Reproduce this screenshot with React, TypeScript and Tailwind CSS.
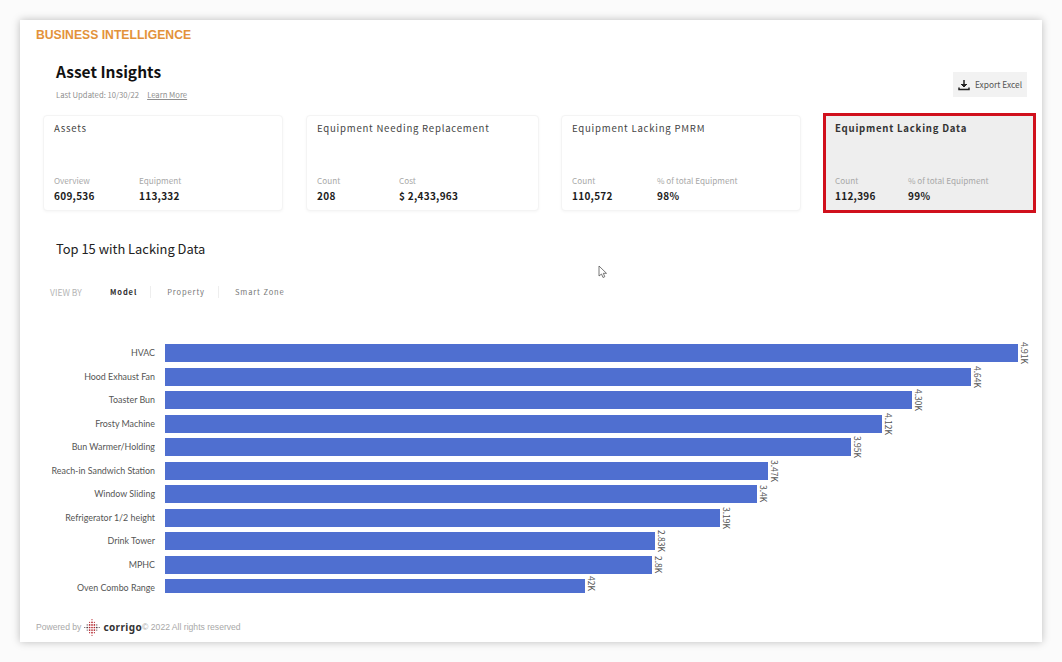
const bars = [
  { label: 'HVAC', value: '4.91K', width: 853 },
  { label: 'Hood Exhaust Fan', value: '4.64K', width: 806 },
  { label: 'Toaster Bun', value: '4.30K', width: 747 },
  { label: 'Frosty Machine', value: '4.12K', width: 717 },
  { label: 'Bun Warmer/Holding', value: '3.95K', width: 686 },
  { label: 'Reach-in Sandwich Station', value: '3.47K', width: 603 },
  { label: 'Window Sliding', value: '3.4K', width: 592 },
  { label: 'Refrigerator 1/2 height', value: '3.19K', width: 555 },
  { label: 'Drink Tower', value: '2.83K', width: 490 },
  { label: 'MPHC', value: '2.8K', width: 487 },
  { label: 'Oven Combo Range', value: '42K', width: 420 },
];

type Stat = { label: string; value: string; width: string };

function Card({ title, stats, className }: { title: string; stats: Stat[]; className: string }) {
  return (
    <div className={`flex h-[96px] flex-col justify-between rounded-sm border border-[#f4f4f4] bg-white px-[10px] pb-[6px] pt-[4px] shadow-[0_1px_3px_rgba(0,0,0,0.04)] ${className}`}>
      <div className="text-[9.6px] leading-[16px] tracking-[0.08em] text-[#444]">{title}</div>
      <div className="flex">
        {stats.map(s => (
          <div key={s.label} className={s.width}>
            <div className="text-[8.2px] leading-[15px] text-[#a8a8a8]">{s.label}</div>
            <div className="text-[10px] font-bold leading-[16px] tracking-[0.03em] text-[#1c1c1c]">{s.value}</div>
          </div>
        ))}
      </div>
    </div>
  );
}

function CorrigoMark() {
  const dots: [number, number, number][] = [];
  for (let y = -3; y <= 3; y++) {
    for (let x = -3; x <= 3; x++) {
      if (x === 0 || y === 0 || (Math.abs(x) === 1 && Math.abs(y) <= 2) || (Math.abs(y) === 1 && Math.abs(x) <= 2)) {
        dots.push([x, y, Math.abs(x) + Math.abs(y) <= 2 ? 0.85 : 0.6]);
      }
    }
  }
  return (
    <svg width="16" height="17" viewBox="-8 -8.5 16 17" className="mx-[3px] shrink-0">
      {dots.map(([x, y, r]) => (
        <circle key={`${x}-${y}`} cx={x * 2.4} cy={y * 2.6} r={r} fill={Math.abs(x) <= 1 ? '#b3262e' : '#4a3c40'} />
      ))}
    </svg>
  );
}

export default function App() {
  return (
    <div className="h-[662px] w-[1062px] overflow-hidden bg-[#fbfbfb] p-[20px] font-['Noto_Sans_CJK_JP','Noto_Sans',sans-serif]">
      <div className="relative flex h-[622px] w-[1022px] flex-col bg-white shadow-[0_0_8px_rgba(0,0,0,0.25)]">
        <div className="pl-[16px] pt-[7px] font-['Liberation_Sans',sans-serif] text-[12.2px] font-bold leading-[16px] text-[#e3923a]">
          BUSINESS INTELLIGENCE
        </div>

        <div className="flex items-start justify-between pl-[36px] pr-[15px] pt-[16px]">
          <div>
            <h1 className="text-[15.5px] font-bold leading-[25px] text-[#111]">Asset Insights</h1>
            <div className="mt-[5px] flex gap-[8px] text-[7.7px] leading-[12px] text-[#8f8f8f]">
              <span>Last Updated: 10/30/22</span>
              <span className="underline">Learn More</span>
            </div>
          </div>
          <button className="mt-[13px] flex h-[25px] w-[74px] items-center justify-center gap-[5px] bg-[#f2f2f2] text-[8.4px] text-[#555]">
            <svg width="12" height="12" viewBox="0 0 12 12" fill="none" stroke="#222" strokeWidth="1.5">
              <path d="M6 1v6" />
              <path d="M3 5l3 3 3-3" fill="#222" stroke="#222" strokeWidth="1" />
              <path d="M1 8.5v2h10v-2" />
            </svg>
            Export Excel
          </button>
        </div>

        <div className="flex items-center pl-[23px] pr-[6px] pt-[12px]">
          <Card
            title="Assets"
            className="w-[240px]"
            stats={[
              { label: 'Overview', value: '609,536', width: 'w-[85px]' },
              { label: 'Equipment', value: '113,332', width: '' },
            ]}
          />
          <Card
            title="Equipment Needing Replacement"
            className="ml-[23px] w-[233px]"
            stats={[
              { label: 'Count', value: '208', width: 'w-[82px]' },
              { label: 'Cost', value: '$ 2,433,963', width: '' },
            ]}
          />
          <Card
            title="Equipment Lacking PMRM"
            className="ml-[22px] w-[240px]"
            stats={[
              { label: 'Count', value: '110,572', width: 'w-[85px]' },
              { label: '% of total Equipment', value: '98%', width: '' },
            ]}
          />
          <div className="ml-[22px] flex h-[100px] w-[213px] flex-col justify-between border-[3px] border-[#d0101c] bg-[#eeeeee] px-[9px] pb-[6px] pt-[4px]">
            <div className="text-[9.6px] font-bold leading-[16px] tracking-[0.08em] text-[#333]">Equipment Lacking Data</div>
            <div className="flex">
              <div className="w-[73px]">
                <div className="text-[8.2px] leading-[15px] text-[#a8a8a8]">Count</div>
                <div className="text-[10px] font-bold leading-[16px] tracking-[0.03em] text-[#1c1c1c]">112,396</div>
              </div>
              <div>
                <div className="text-[8.2px] leading-[15px] text-[#a8a8a8]">% of total Equipment</div>
                <div className="text-[10px] font-bold leading-[16px] tracking-[0.03em] text-[#1c1c1c]">99%</div>
              </div>
            </div>
          </div>
        </div>

        <h2 className="pl-[36px] pt-[25px] text-[12.9px] leading-[22px] text-[#222]">Top 15 with Lacking Data</h2>

        <div className="flex items-center pl-[30px] pt-[25px] text-[7.5px] leading-[14px] tracking-[0.12em]">
          <span className="w-[60px] text-[8.5px] tracking-normal text-[#b5b5b5]">VIEW BY</span>
          <span className="font-bold text-[#333]">Model</span>
          <span className="ml-[13px] mr-[16px] h-[12px] w-px bg-[#eeeeee]" />
          <span className="text-[#777]">Property</span>
          <span className="ml-[13px] mr-[16px] h-[12px] w-px bg-[#eeeeee]" />
          <span className="text-[#777]">Smart Zone</span>
        </div>

        <div className="mt-[45px]">
          {bars.map(b => (
            <div key={b.label} className="group mb-[5.5px] flex h-[18px] items-center last:mb-0">
              <div className="w-[145px] shrink-0 pr-[10px] text-right font-['Lato',sans-serif] text-[8.9px] text-[#555]">{b.label}</div>
              <div className="h-full bg-[#4f6fd0] group-last:h-[14px] group-last:self-start" style={{ width: b.width }} />
              <span className="ml-[2px] text-[8.5px] leading-[9px] text-[#555] [writing-mode:vertical-rl] group-last:-mt-[3px] group-last:self-start">{b.value}</span>
            </div>
          ))}
        </div>

        <div className="mt-[22px] flex items-center pl-[16px] font-['Liberation_Sans',sans-serif] text-[8.6px] text-[#a8a8a8]">
          <span>Powered by</span>
          <CorrigoMark />
          <span className="font-['Noto_Sans',sans-serif] text-[10px] font-bold tracking-[0.04em] text-[#333]">corrigo</span>
          <span>© 2022 All rights reserved</span>
        </div>

        <svg width="10" height="14" viewBox="0 0 10 14" className="absolute left-[578px] top-[245px]" fill="#fff" stroke="#555" strokeWidth="0.8">
          <path d="M1 1v10l2.5-2 1.5 3.5 1.8-.8L5.3 8.3H8.5z" />
        </svg>
      </div>
    </div>
  );
}
